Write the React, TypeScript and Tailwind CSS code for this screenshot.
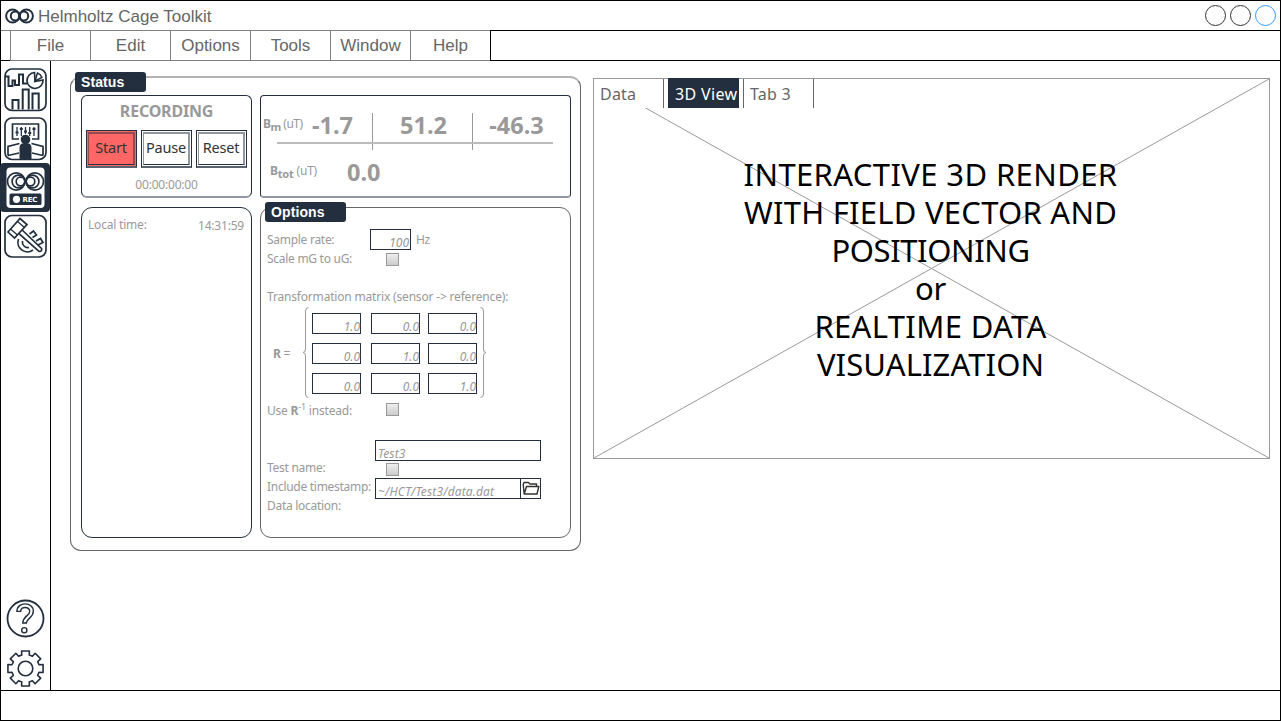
import type { ReactNode } from "react";

const INK = "#232f3e";

function CoilLogo() {
  return (
    <svg className="h-[18px] w-[30px]" viewBox="5 6 30 18" fill="none" stroke={INK}>
      <circle cx="12.600" cy="15" r="6.500" strokeWidth="2" />
      <circle cx="26.400" cy="15" r="6.500" strokeWidth="2" />
      <circle cx="15.300" cy="15" r="4.500" strokeWidth="2" />
      <circle cx="23.700" cy="15" r="4.500" strokeWidth="2" />
    </svg>
  );
}

function ChartsIcon() {
  return (
    <svg className="h-[49px] w-[49px]" viewBox="1 65 49 49" fill="none" stroke={INK} strokeWidth="1.7">
      <rect x="5" y="69" width="41" height="41.5" rx="7" />
      <path d="M5 76.500H8.500V86H12.500V80.500H15V85H19V74.500H23V83.500H27" strokeWidth="2" />
      <path d="M34.500 72.500A8 8 0 1 0 43 80L35 81.500Z" />
      <path d="M35 81L37.500 73A7.500 7.500 0 0 1 42 77.500Z" strokeWidth="1.500" />
      <path d="M12.500 109.500V100H18.500V109.500M22.700 109.500V89.600H28.700V109.500M32.500 109.500V93.600H38.700V109.500" strokeWidth="2" />
    </svg>
  );
}

function ControlIcon() {
  return (
    <svg className="h-[49px] w-[49px]" viewBox="1 114 49 49" fill="none" stroke={INK} strokeWidth="1.7">
      <rect x="5" y="118" width="41" height="41.500" rx="7" />
      <path d="M19 139H12.500V124H38.500V139H32" />
      <path d="M17 127V136M21.300 127V136M25.500 127V134M29.700 127V136M34 127V136" strokeWidth="1.300" />
      <path d="M15.500 132.500H18.500M19.800 129H22.800M24 131.500H27M28.200 133H31.200M32.500 129H35.500" strokeWidth="2" />
      <path d="M8 155.500V146.500L19.500 143.500M8 155.500L19 153M43 155.500V146.500L31.500 143.500M43 155.500L32 153" />
      <circle cx="25.500" cy="139.500" r="4.800" fill={INK} stroke="none" />
      <path d="M19.500 159.500V148Q19.500 143.500 23 143.500H28Q31.500 143.500 31.500 148V159.500Z" fill={INK} stroke="none" />
    </svg>
  );
}

function RecordIcon() {
  return (
    <svg className="h-[49px] w-[50px]" viewBox="0 163 50 49" fill="none" stroke={INK}>
      <rect x="0" y="163" width="50" height="49" rx="4" fill={INK} stroke="none" />
      <rect x="6.500" y="167.500" width="38" height="40.500" rx="4" fill="#fff" stroke="none" />
      <g strokeWidth="1.700">
        <circle cx="16.200" cy="181.500" r="8.700" />
        <circle cx="34.800" cy="181.500" r="8.700" />
        <circle cx="18.500" cy="181.500" r="6.400" />
        <circle cx="32.500" cy="181.500" r="6.400" />
        <circle cx="20.500" cy="181.500" r="4.300" />
        <circle cx="30.500" cy="181.500" r="4.300" />
      </g>
      <rect x="9.500" y="193.500" width="32" height="11.500" rx="1.500" fill={INK} stroke="none" />
      <circle cx="16.500" cy="199.300" r="3.600" fill="#fff" stroke="none" />
      <text x="22.500" y="202" fill="#fff" stroke="none" fontSize="7" fontWeight="700" fontFamily="DejaVu Sans, sans-serif" textLength="15">
        REC
      </text>
    </svg>
  );
}

function ToolsIcon() {
  return (
    <svg className="h-[49px] w-[49px]" viewBox="1 212 49 49" fill="none" stroke={INK} strokeWidth="1.700">
      <rect x="5" y="215.500" width="41" height="41.500" rx="7" />
      <path d="M18.500 239A9.500 9.500 0 0 0 33 250M22.500 241A5.500 5.500 0 0 0 29 247.500" />
      <path d="M29.500 234L33.500 231L36.500 235L32.500 237.500M36 241L40.500 238.500L43 242.500L38 245" />
      <path d="M20 228L41.500 248.500Q42.500 251.500 39 251.500L16.500 231.500Z" fill="#fff" />
      <path d="M8 232L20 218.500L27 224.500L14.500 238Z" fill="#fff" />
      <path d="M10.500 229L17.500 235M17.500 221.500L24.500 227.500" strokeWidth="1.300" />
    </svg>
  );
}

function HelpIcon() {
  const mark = "M18.800 611.500C18.500 603.500 32 604 31.500 611.500C31.300 617 25 617 24.500 623";
  return (
    <svg className="h-[50px] w-[49px]" viewBox="1 594 49 50" fill="none" stroke={INK}>
      <circle cx="25.500" cy="618.500" r="18" strokeWidth="1.800" />
      <path d={mark} strokeWidth="5" strokeLinecap="butt" strokeLinejoin="round" />
      <path d={mark} stroke="#fff" strokeWidth="2.200" strokeLinecap="butt" strokeLinejoin="round" />
      <path d="M16.300 611.400H21.300M22 623H27" strokeWidth="1.400" />
      <circle cx="24.300" cy="630.200" r="2.600" strokeWidth="1.400" />
    </svg>
  );
}

function gearPath(cx: number, cy: number, outer: number, inner: number) {
  const points: string[] = [];
  for (let i = 0; i < 8; i++) {
    const mid = (i * Math.PI) / 4;
    const corners: [number, number][] = [
      [inner, -0.27],
      [outer, -0.22],
      [outer, 0.22],
      [inner, 0.27],
    ];
    for (const [r, a] of corners) {
      points.push(`${(cx + r * Math.cos(mid + a)).toFixed(2)} ${(cy + r * Math.sin(mid + a)).toFixed(2)}`);
    }
  }
  return `M${points.join("L")}Z`;
}

function GearIcon() {
  return (
    <svg className="h-[46px] w-[49px]" viewBox="1 644 49 46" fill="none" stroke={INK} strokeWidth="1.600" strokeLinejoin="round">
      <path d={gearPath(25.5, 668.5, 18, 14)} />
      <circle cx="25.500" cy="668.500" r="7.300" />
    </svg>
  );
}

function FolderIcon() {
  return (
    <svg className="h-[15px] w-[18px] shrink-0" viewBox="0 0 18 15" fill="none" stroke="#333" strokeWidth="1.400" strokeLinejoin="round">
      <path d="M2.200 13L1.200 3.500L2 1.500H6.500L8 3H14.500V5.500M2.200 13L4.500 5.500H16.800L15 13Z" />
    </svg>
  );
}

function Brace({ flip = false }: { flip?: boolean }) {
  return (
    <svg
      className={flip ? "h-[92px] w-[7px] -scale-x-100" : "h-[92px] w-[7px]"}
      viewBox="0 0 7 92"
      fill="none"
      stroke="#999"
      strokeWidth="1"
    >
      <path d="M5.500 .5Q2.500 .5 2.500 4V42Q2.500 45.500 0 45.500Q2.500 45.500 2.500 49V87Q2.500 90.500 5.500 90.500" />
    </svg>
  );
}

function Legend({ children, wide = false }: { children: ReactNode; wide?: boolean }) {
  return (
    <div
      className={`absolute -top-[6px] left-[4px] h-[20px] rounded-[3px] bg-[#232f3e] pl-[6px] font-['Liberation_Sans',sans-serif] text-[14px] leading-[20px] font-bold tracking-[0.1px] text-white ${
        wide ? "w-[81px]" : "w-[71px]"
      }`}
    >
      {children}
    </div>
  );
}

function ActionButton({ children, danger = false }: { children: ReactNode; danger?: boolean }) {
  return (
    <button className={`h-[38px] w-[51px] border border-b-2 border-[#232f3e] border-b-[#5a6470] p-px ${danger ? "bg-[#ff6666]" : "bg-white"}`}>
      <span
        className={`flex h-full w-full items-center justify-center border-t-2 border-r-2 border-b border-l pb-[2px] text-[14.5px] tracking-[-0.2px] whitespace-nowrap text-[#333] ${
          danger ? "border-[#914b52] border-b-[#232f3e]" : "border-[#9197a0] border-b-[#232f3e]"
        }`}
      >
        {children}
      </span>
    </button>
  );
}

function Check() {
  return <div className="h-[13px] w-[13px] border border-[#999] bg-linear-to-b from-[#eee] to-[#ccc]" />;
}

function Cell({ children }: { children: ReactNode }) {
  return (
    <div className="h-[21px] w-[49px] border border-[#232f3e] text-right text-[12px] leading-[25px] tracking-normal text-[#999] italic">
      {children}
    </div>
  );
}

const menus = ["File", "Edit", "Options", "Tools", "Window", "Help"];
const matrix = ["1.0", "0.0", "0.0", "0.0", "1.0", "0.0", "0.0", "0.0", "1.0"];
const message = [
  { text: "INTERACTIVE 3D RENDER", spacing: "tracking-[0.38px]" },
  { text: "WITH FIELD VECTOR AND", spacing: "tracking-[0.25px]" },
  { text: "POSITIONING", spacing: "tracking-[-0.4px]" },
  { text: "or", spacing: "tracking-[-0.3px]" },
  { text: "REALTIME DATA", spacing: "tracking-[0.35px]" },
  { text: "VISUALIZATION", spacing: "tracking-[0.1px]" },
];

function ReadingsPanel() {
  return (
    <section className="relative h-[103px] w-[311px] rounded-[4px] border border-b-2 border-[#232f3e] border-b-[#9197a0] text-[#999]">
      <div className="flex pt-[17px]">
        <div className="flex h-[37px] w-[112px] border-r border-[#999] pl-[2px]">
          <span className="w-[49px] pt-px text-[12px] leading-[19px] tracking-[-0.5px] whitespace-nowrap">
            <b>
              B<sub className="bottom-[-3px] text-[11px]">m</sub>
            </b>{" "}
            (uT)
          </span>
          <b className="text-[23.5px] leading-[25px]">-1.7</b>
        </div>
        <b className="h-[37px] w-[100px] border-r border-[#999] pl-[2px] text-center text-[23.5px] leading-[25px]">51.2</b>
        <b className="w-[87px] text-center text-[23.5px] leading-[25px]">-46.3</b>
      </div>
      <div className="absolute top-[46px] left-[16px] h-[2px] w-[276px] bg-[#bbb]" />
      <div className="flex pt-[10px] pl-[9px]">
        <span className="w-[77px] pt-px text-[12px] leading-[19px] tracking-[-0.2px]">
          <b>
            B<sub className="bottom-[-3px] text-[11px]">tot</sub>
          </b>{" "}
          (uT)
        </span>
        <b className="text-[23.5px] leading-[25px]">0.0</b>
      </div>
    </section>
  );
}

function OptionsPanel() {
  return (
    <section className="relative h-[331px] w-[311px] rounded-[11px] border border-[#666] pt-[21px] pl-[6px] text-[12px] leading-[19px] tracking-[-0.28px] text-[#999]">
      <Legend wide>Options</Legend>
      <div className="flex h-[58px]">
        <div className="w-[103px] pt-px">
          <p>Sample rate:</p>
          <p>Scale mG to uG:</p>
        </div>
        <div>
          <div className="flex gap-[5px]">
            <div className="h-[21px] w-[41px] border border-[#232f3e] pr-px text-right leading-[25px] tracking-normal italic">100</div>
            <span className="pt-px">Hz</span>
          </div>
          <div className="pt-[3px] pl-[16px]">
            <Check />
          </div>
        </div>
      </div>
      <p className="h-[20px] tracking-[-0.18px]">Transformation matrix (sensor -&gt; reference):</p>
      <div className="flex h-[94px]">
        <b className="w-[36px] pt-[37px] pl-[6px]">
          R <span className="font-normal">=</span>
        </b>
        <Brace />
        <div className="grid h-[81px] grid-cols-[59px_57px_51px] gap-y-[9px] pt-[6px] pl-[2px]">
          {matrix.map((value, i) => (
            <Cell key={i}>{value}</Cell>
          ))}
        </div>
        <Brace flip />
      </div>
      <div className="flex h-[39px]">
        <p className="w-[119px] tracking-[-0.2px]">
          Use <b>R</b>
          <sup className="top-[-5px] text-[9px]">-1</sup> instead:
        </p>
        <div className="pt-[2px]">
          <Check />
        </div>
      </div>
      <div className="flex">
        <div className="w-[108px] pt-[18px] whitespace-nowrap">
          <p>Test name:</p>
          <p>Include timestamp:</p>
          <p>Data location:</p>
        </div>
        <div>
          <div className="h-[21px] w-[166px] border border-[#232f3e] pl-[2px] leading-[25px] tracking-[0.1px] italic">Test3</div>
          <div className="h-[17px] pt-[2px] pl-[11px]">
            <Check />
          </div>
          <div className="flex h-[21px] w-[166px] border border-[#232f3e]">
            <div className="w-[144px] pl-[2px] leading-[25px] tracking-[0.15px] italic">~/HCT/Test3/data.dat</div>
            <div className="flex w-[20px] items-center justify-center border-l border-[#232f3e]">
              <FolderIcon />
            </div>
          </div>
        </div>
      </div>
    </section>
  );
}

function ViewPanel() {
  return (
    <section className="relative mt-[17px] h-[381px] w-[677px] border border-[#999]">
      <svg className="absolute inset-0 h-full w-full" viewBox="0 0 675 379" fill="none" stroke="#999">
        <path d="M0 0L675 379M0 379L675 0" />
      </svg>
      <div className="relative flex h-[29px] gap-[4px] text-[16px] leading-[31px] text-[#666]">
        <div className="w-[70px] border-r border-[#666] bg-white pl-[6px] tracking-[0.2px]">Data</div>
        <div className="-mt-px w-[71px] bg-[#232f3e] pt-px pl-[7px] tracking-[0.35px] whitespace-nowrap text-white">3D View</div>
        <div className="w-[71px] border-x border-[#666] bg-white pl-[6px] tracking-[0.2px]">Tab 3</div>
      </div>
      <div className="relative pt-[47px] pr-[2px] text-center text-[31px] leading-[38px] text-black">
        {message.map(({ text, spacing }) => (
          <p key={text} className={spacing}>
            {text}
          </p>
        ))}
      </div>
    </section>
  );
}

export default function App() {
  return (
    <div className="flex h-[721px] w-[1281px] flex-col border border-black bg-white font-['Noto_Sans',sans-serif]">
      <header className="flex h-[29px] items-center justify-between pr-[4px] pl-[4px]">
        <div className="flex items-center gap-[3px]">
          <CoilLogo />
          <h1 className="pt-px font-['Liberation_Sans',sans-serif] text-[17px] leading-[29px] text-[#666]">Helmholtz Cage Toolkit</h1>
        </div>
        <div className="flex gap-[4px]">
          <span className="h-[21px] w-[21px] rounded-full border border-[#333]" />
          <span className="h-[21px] w-[21px] rounded-full border border-[#333]" />
          <span className="h-[21px] w-[21px] rounded-full border border-[#3399ff]" />
        </div>
      </header>
      <nav className="flex h-[31px] font-['Liberation_Sans',sans-serif] text-[17px] leading-[29px] text-[#666]">
        <div className="w-[9px] border-t border-b border-t-[#808080] border-b-black" />
        {menus.map((name) => (
          <div key={name} className="w-[80px] border-y border-l border-[#808080] text-center">
            {name}
          </div>
        ))}
        <div className="flex-1 border-y border-l border-black" />
      </nav>
      <div className="flex h-[630px] border-b border-black">
        <aside className="flex w-[50px] shrink-0 flex-col border-r border-black pt-[4px]">
          <ChartsIcon />
          <ControlIcon />
          <div className="-mr-px -ml-px">
            <RecordIcon />
          </div>
          <ToolsIcon />
          <div className="mt-auto">
            <HelpIcon />
            <GearIcon />
          </div>
        </aside>
        <main className="flex gap-[12px] pl-[19px]">
          <section className="relative mt-[15px] flex h-[475px] w-[511px] gap-[8px] rounded-[11px] border border-t-2 border-[#666] border-t-[#b3b3b3] pt-[17px] pl-[10px]">
            <div className="absolute top-0 left-0">
              <Legend>Status</Legend>
            </div>
            <div className="flex flex-col gap-[9px]">
              <section className="h-[103px] w-[171px] rounded-[6px] border border-b-2 border-[#232f3e] border-b-[#9197a0] text-center text-[#999]">
                <h2 className="pt-[3px] text-[16px] leading-[24px] font-bold tracking-[-0.2px]">RECORDING</h2>
                <div className="flex gap-[4px] pt-[7px] pl-[4px]">
                  <ActionButton danger>Start</ActionButton>
                  <ActionButton>Pause</ActionButton>
                  <ActionButton>Reset</ActionButton>
                </div>
                <p className="pt-[7px] text-[12px] leading-[19px] tracking-[-0.2px]">00:00:00:00</p>
              </section>
              <section className="flex h-[331px] w-[171px] justify-between rounded-[11px] border border-[#232f3e] pr-[7px] pl-[6px] pt-[7px] text-[12px] leading-[19px] tracking-[-0.2px] text-[#999]">
                <span>Local time:</span>
                <span className="pt-px">14:31:59</span>
              </section>
            </div>
            <div className="flex flex-col gap-[9px]">
              <ReadingsPanel />
              <OptionsPanel />
            </div>
          </section>
          <ViewPanel />
        </main>
      </div>
    </div>
  );
}
